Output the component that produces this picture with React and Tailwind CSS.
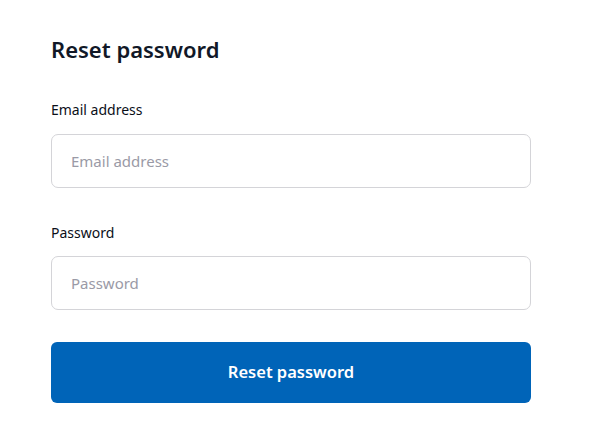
import { useState } from 'react';

const ResetPassword = () => {
  const [email, setEmail] = useState('');
  const [password, setPassword] = useState('');

  const handleSubmit = (e) => {
    e.preventDefault();
  };

  return (
    <div className="min-h-screen bg-white font-['Noto_Sans','Open_Sans',sans-serif]">
      <form onSubmit={handleSubmit} className="w-[480px] ml-[51px] pt-[34px] flex flex-col">
        <h2 className="text-[22px] leading-[30px] font-semibold text-[#111827]">Reset password</h2>

        <label htmlFor="email" className="mt-[36px] text-[14px] leading-[20px] font-normal text-[#0b0f19]">
          Email address
        </label>
        <input
          id="email"
          type="email"
          value={email}
          onChange={(e) => setEmail(e.target.value)}
          placeholder="Email address"
          className="mt-[14px] h-[54px] px-[19px] border border-[#d4d4d8] rounded-[7px] text-[15px] text-[#111827] placeholder:text-[#9a9aa6] focus:outline-none"
        />

        <label htmlFor="password" className="mt-[35px] text-[14px] leading-[20px] font-normal text-[#0b0f19]">
          Password
        </label>
        <input
          id="password"
          type="password"
          value={password}
          onChange={(e) => setPassword(e.target.value)}
          placeholder="Password"
          className="mt-[13px] h-[54px] px-[19px] border border-[#d4d4d8] rounded-[7px] text-[15px] text-[#111827] placeholder:text-[#9a9aa6] focus:outline-none"
        />

        <button
          type="submit"
          className="mt-[32px] h-[61px] rounded-[6px] bg-[#0064b8] text-white text-[16.5px] font-semibold"
        >
          Reset password
        </button>
      </form>
    </div>
  );
};

export default ResetPassword;
